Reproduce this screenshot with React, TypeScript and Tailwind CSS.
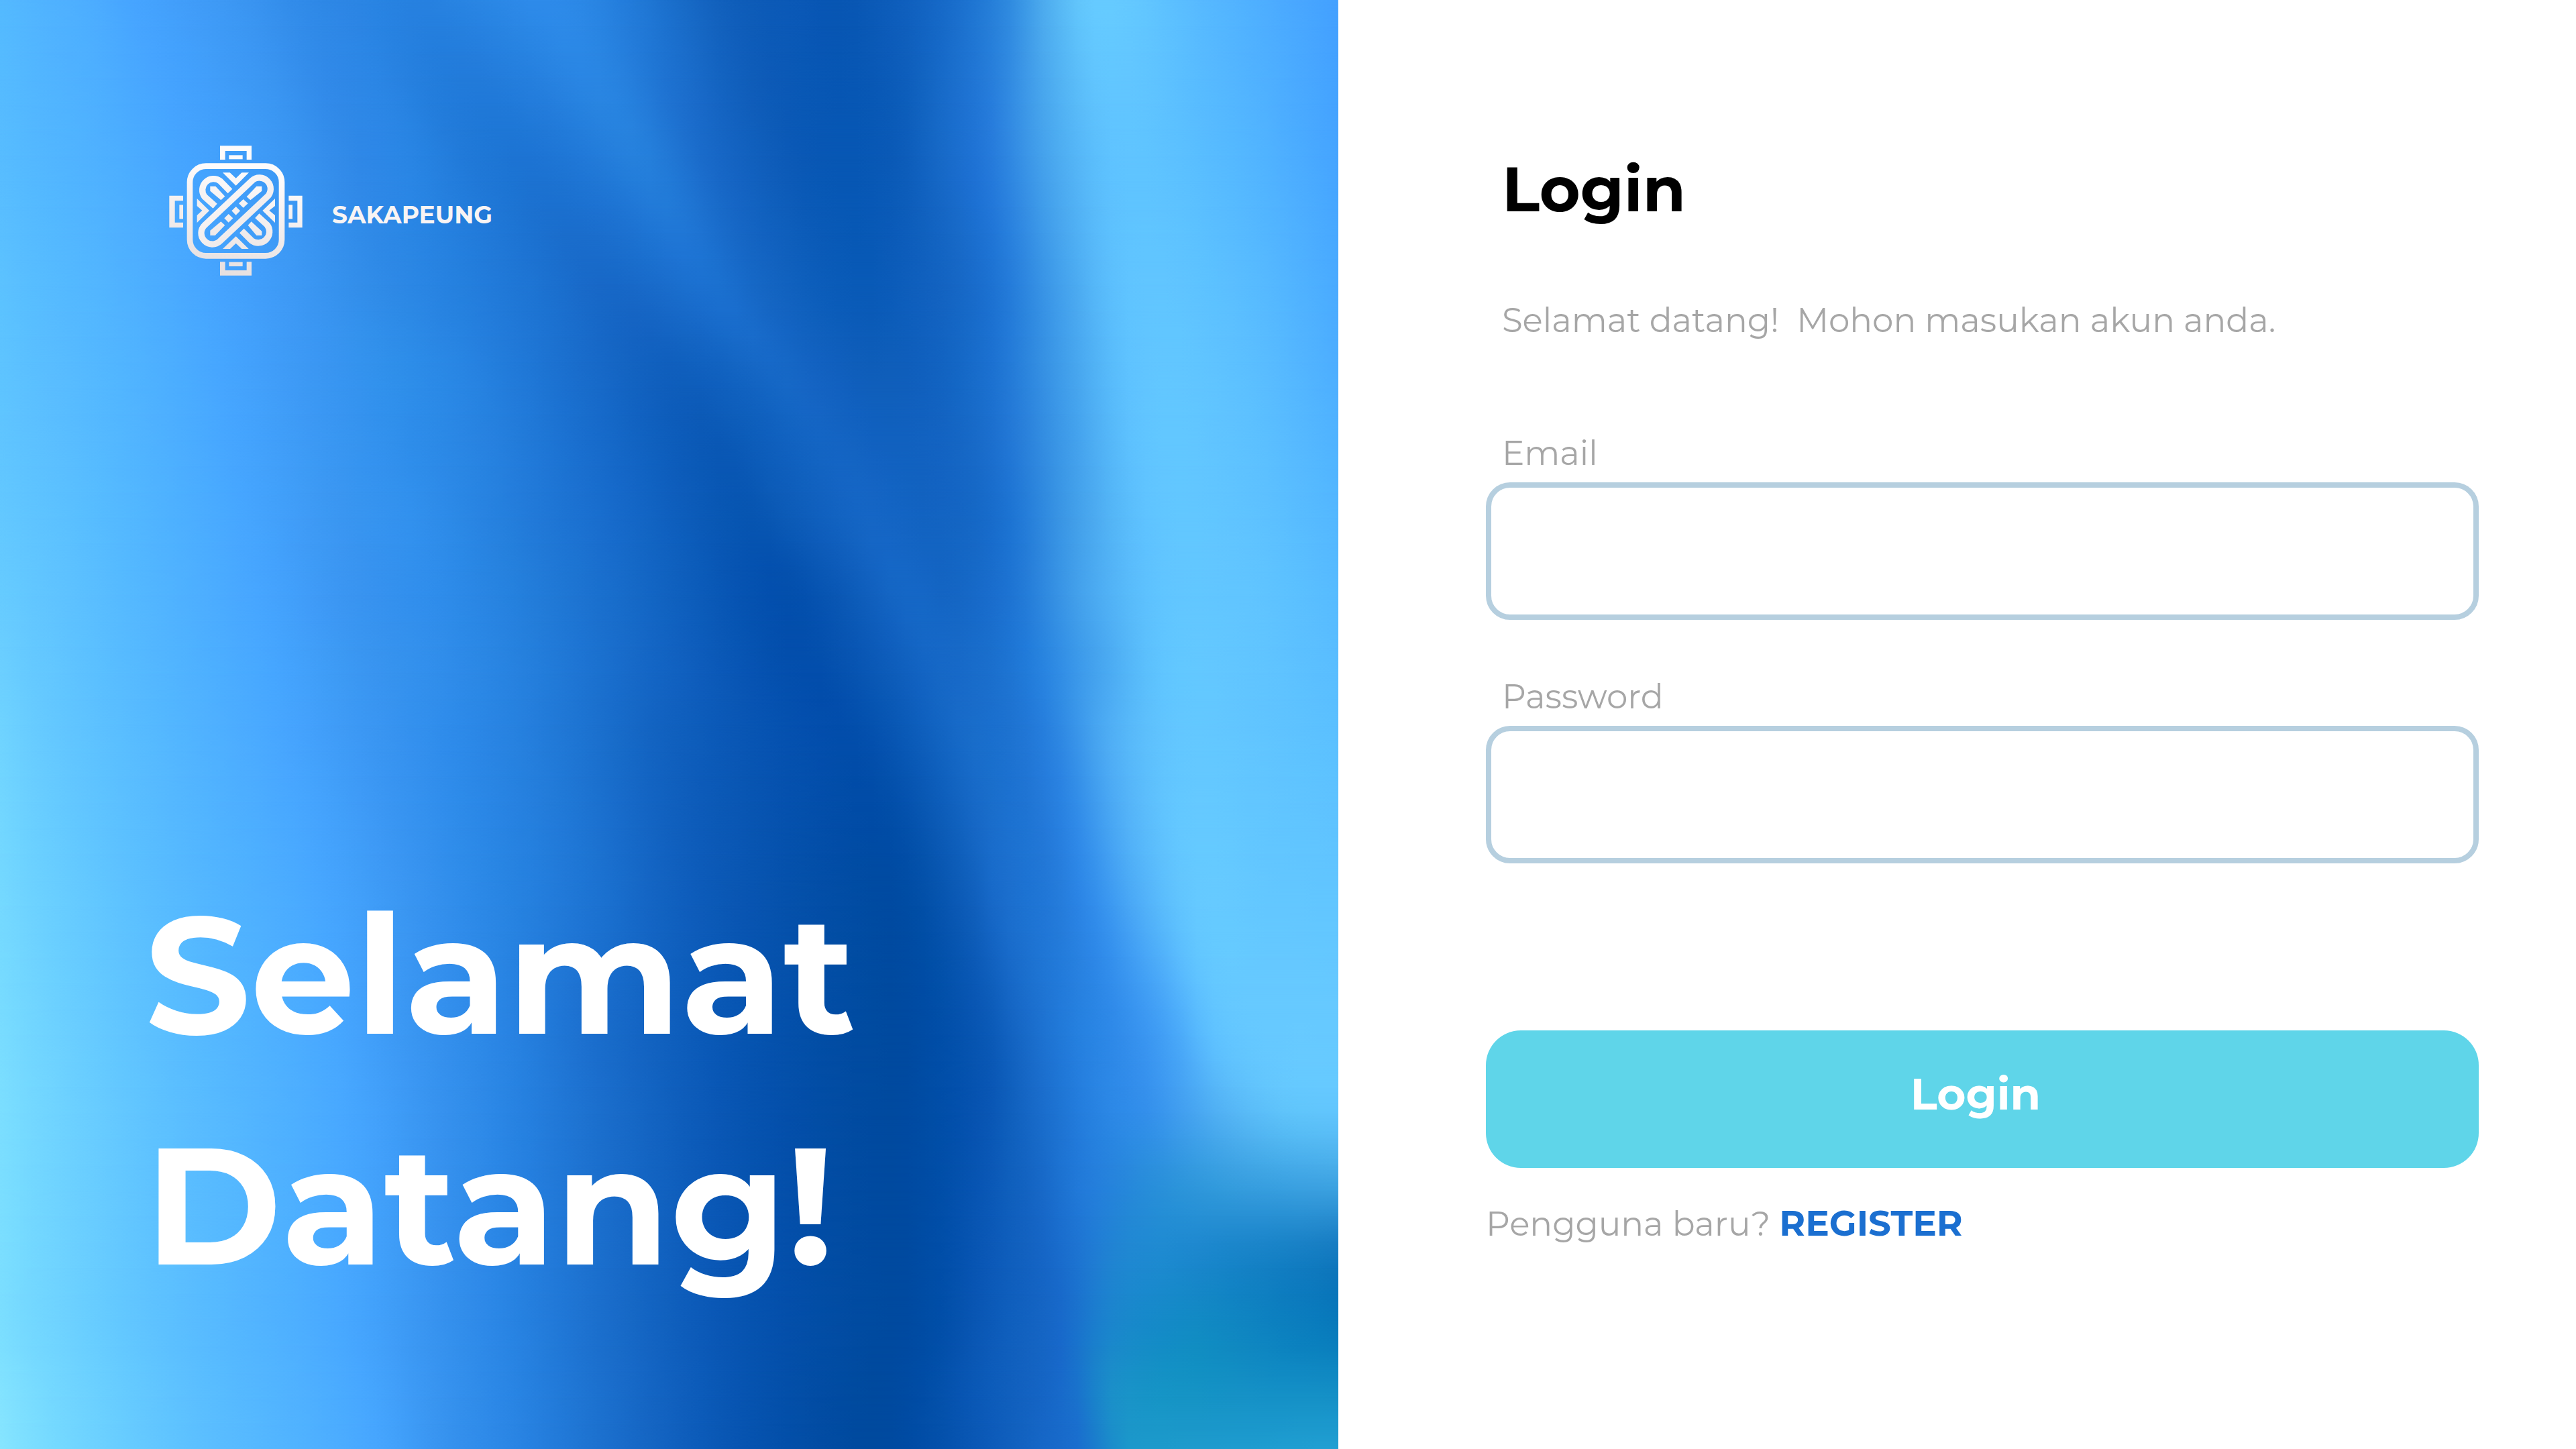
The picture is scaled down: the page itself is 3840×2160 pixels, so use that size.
import React from "react";

type RGB = [number, number, number];
type Stop = { x: number; color: RGB };
type Row = { y: number; stops: Stop[] };

const W = 1565;
const H = 1568;

const hexToRgb = (hex: string): RGB => [
  parseInt(hex.slice(0, 2), 16),
  parseInt(hex.slice(2, 4), 16),
  parseInt(hex.slice(4, 6), 16),
];

const row = (y: number, text: string): Row => ({
  y,
  stops: text.split("|").map((part) => {
    const [x, hex] = part.trim().split(" ");
    return { x: Number(x), color: hexToRgb(hex) };
  }),
});

/* The left half hardly changes in the lower rows, so those rows share it. */
const LOWER_LEFT =
  "0 7bdeff|60 70d4ff|190 5dc1ff|400 48a8ff|505 3894f0|602 2883e2|710 1a6dcb|868 0754b1|1035 004a9f|1090 004da6|";

/* Colour mesh of the backdrop: each row lists the same features from left to right. */
const mesh: Row[] = [
  row(0, "0 54baff|60 50b2ff|110 4cadff|160 46a4ff|275 3c97f3|350 318be9|400 2d86e5|450 2883e2|490 2781e0|560 2a86e4|650 2e8bea|735 237cda|845 1160bc|935 0a58b6|985 0856b3|1060 1060be|1120 1a6fcd|1180 2f8adf|1225 50aff0|1280 66cbff|1420 55b7ff|1565 43a0ff"),
  row(160, "0 57bcff|60 52b6ff|120 4eb0ff|210 46a5ff|325 3c98f4|410 3089e8|470 2a86e5|540 217ad9|600 1d75d4|670 2179d8|745 2681dd|820 1a6bca|895 0f5dba|945 0958b5|1000 0757b4|1050 0b5bb8|1095 1668c6|1155 2479da|1230 4aa8ef|1300 5fc3ff|1420 57bbff|1565 45a4ff"),
  row(320, "0 5cc2ff|60 56bbff|120 52b5ff|242 47a6ff|345 3d99f5|435 318de9|510 2884e2|620 1e75d4|710 1767c6|770 186ac9|840 1b70d0|895 1566c4|955 0d5ebb|985 0a5bb8|1020 095ab7|1070 0f5fbd|1130 1769c7|1175 2178d7|1250 47a5ee|1315 5fc3ff|1430 5cc0ff|1565 4aabff"),
  row(400, "0 5ec4ff|60 59bdff|125 53b7ff|253 47a7ff|362 3c98f4|455 3090eb|540 2885e3|660 1b70cf|775 105fbd|840 1162c0|910 1769c7|945 1464c3|985 105fbd|1010 0f5eba|1040 0f5eba|1090 1161bf|1130 166ac8|1170 1f75d4|1250 43a1ec|1322 5fc3ff|1435 5ec2ff|1565 4daeff"),
  row(480, "0 60c5ff|60 5bbfff|130 54b8ff|264 47a7ff|378 3b98f3|475 2f8eeb|570 2782e0|700 176bcb|830 0a58b5|890 0e5ebb|960 1465c4|990 1464c2|1015 1262c1|1035 1161c0|1060 1161bf|1100 1363c2|1135 1769c7|1175 2074d3|1250 409dea|1330 5fc3ff|1440 5fc3ff|1565 50b3ff"),
  row(560, "0 63c8ff|60 5dc2ff|140 54b9ff|280 47a7ff|393 3b97f2|487 3190ed|592 257fdd|710 186ccc|868 0755b1|930 0d5cb9|1010 1566c5|1030 1566c5|1045 1465c4|1060 1364c3|1085 1263c1|1115 1465c3|1145 1669c7|1185 1e75d4|1260 43a0ea|1340 5fc3ff|1445 60c4ff|1565 53b7ff"),
  row(640, "0 66cbff|60 60c4ff|150 55b9ff|297 47a6ff|410 3a95f1|508 2f8deb|603 2580dd|730 176bc9|905 034fad|970 0956b3|1045 1566c5|1060 1567c6|1075 1567c6|1090 1466c4|1105 1465c3|1125 1567c5|1150 186bca|1190 2077d5|1270 47a5ee|1350 5fc3ff|1450 61c5ff|1565 56bbff"),
  row(720, "0 6bcfff|55 63c7ff|155 56baff|312 47a7ff|425 3a96f1|520 308dea|625 247edc|755 1567c6|930 034eac|1000 0855b2|1090 1567c6|1100 1668c6|1110 1769c7|1120 1769c8|1130 186bc9|1145 196dcb|1170 1c71cf|1210 247fdd|1280 44a2ee|1360 60c5ff|1460 61c5ff|1565 59bdff"),
  row(800, "0 70d4ff|50 66caff|158 58bcff|325 48a7ff|440 3a96f2|530 2e8bea|635 237cda|780 1161bf|975 024dab|1030 0552af|1120 1669c7|1130 186bc9|1140 196dca|1150 196eca|1160 1a6fce|1175 1c71cf|1195 2075d4|1235 2b84e1|1300 50aff5|1370 62c6ff|1470 61c5ff|1565 5bc0ff"),
  row(960, "0 74d8ff|60 69ceff|188 58bcff|364 48a8ff|473 3a96f2|560 2c89e7|667 2078d7|822 0d5bb9|1015 004ba2|1065 014da5|1140 1161be|1150 1566c4|1160 186ac9|1170 1a6dcc|1185 1c70cf|1205 1e74d4|1230 2379d8|1270 2f8ae9|1330 50aff8|1390 64c8ff|1480 63c7ff|1565 61c5ff"),
  row(1120, "0 79dcff|60 6ed2ff|190 5bbfff|386 48a8ff|494 3894f0|592 2984e3|700 1a6dcc|855 0856b3|1035 004a9f|1090 004da6|1155 0a58b5|1170 0e5ebb|1185 1464c2|1200 186ac8|1215 1c70cf|1235 2077d6|1265 2681e0|1315 328deb|1370 46a4f7|1420 5fc2ff|1490 66c9ff|1565 66c9ff"),
  row(1200, LOWER_LEFT + "1155 0956b4|1180 0f5fbc|1200 1566c4|1215 196cca|1230 1c70cf|1260 237cdc|1300 2c88e6|1345 3591ec|1390 45a3f1|1435 55b5f5|1500 60c4fb|1565 62c6fe"),
  row(1280, LOWER_LEFT + "1150 0956b4|1185 1060bd|1210 1666c5|1230 1a6dcc|1250 1f76d5|1280 247edc|1310 2686db|1350 298fda|1400 3098dc|1450 379edf|1510 3ca2e2|1565 3fa4e2"),
  row(1360, LOWER_LEFT + "1150 0a57b5|1185 105fbd|1210 1463c2|1228 1768c8|1245 1a6dcd|1275 1f7ad3|1305 2085d2|1350 1e8ad1|1400 1b87cd|1450 1783c8|1510 147ec3|1565 1178be"),
  row(1440, LOWER_LEFT + "1150 0b58b6|1185 1060be|1210 1463c2|1228 1666c6|1245 186acb|1270 1a78cd|1300 1a86cc|1345 158ac8|1400 118bc3|1450 0f86c1|1510 0b7fbf|1565 087abb"),
  row(1500, "0 82e2ff|60 74d8ff|205 5ec2ff|418 48a8ff|512 3894f0|608 2883e2|718 1a6dcb|868 0754b1|1015 004a9e|1070 004ca4|1150 0c5ab8|1185 1160be|1210 1463c2|1230 1768c7|1250 196ccc|1275 1a7fcb|1300 1b8fc9|1345 1693c6|1400 1492c4|1450 1490c5|1510 138ec5|1565 138dc5"),
  row(1568, "0 86e5ff|60 76daff|215 5ec2ff|430 48a8ff|515 3894f0|612 2883e2|720 1a6dcb|868 0754b1|1010 004a9e|1060 004ba3|1150 0b59b7|1190 1261bf|1220 1667c7|1245 186bcb|1265 1a70cf|1290 1b83cc|1315 1c96cb|1350 1d9acb|1400 1f9bcd|1450 1f9ccf|1510 209ed1|1565 219fd2"),
];

/* Smooth curve through the points (xs[i], ys[i]), read at x. */
const curve = (xs: number[], ys: number[], x: number): number => {
  const last = xs.length - 1;
  let i = 0;
  while (i < last - 1 && x > xs[i + 1]) i += 1;
  const span = xs[i + 1] - xs[i];
  const t = (x - xs[i]) / span;
  const slope = (k: number) => {
    const a = Math.max(k - 1, 0);
    const b = Math.min(k + 1, last);
    return (ys[b] - ys[a]) / (xs[b] - xs[a]);
  };
  const t2 = t * t;
  const t3 = t2 * t;
  return (
    (2 * t3 - 3 * t2 + 1) * ys[i] +
    (t3 - 2 * t2 + t) * span * slope(i) +
    (3 * t2 - 2 * t3) * ys[i + 1] +
    (t3 - t2) * span * slope(i + 1)
  );
};

const STEP_X = 20;
const STEP_Y = 28;
const CHANNELS = [0, 1, 2] as const;
const meshYs = mesh.map((r) => r.y);

const bands = Array.from({ length: H / STEP_Y + 1 }, (_, n) => {
  const y = n * STEP_Y;
  const xs = mesh[0].stops.map((_, j) => curve(meshYs, mesh.map((r) => r.stops[j].x), y));
  const channels = CHANNELS.map((c) =>
    mesh[0].stops.map((_, j) => curve(meshYs, mesh.map((r) => r.stops[j].color[c]), y)),
  );
  const stops = Array.from({ length: Math.ceil(W / STEP_X) + 1 }, (_, k) => {
    const x = Math.min(k * STEP_X, W);
    const [r, g, b] = channels.map((ys) => Math.round(Math.min(255, Math.max(0, curve(xs, ys, x)))));
    return { offset: x / W, color: `rgb(${r} ${g} ${b})` };
  });
  return { y, stops };
});

function Backdrop() {
  return (
    <svg
      className="absolute inset-0 h-full w-full"
      viewBox={`0 0 ${W} ${H}`}
      preserveAspectRatio="none"
      aria-hidden="true"
    >
      <defs>
        {bands.map((band, i) => (
          <linearGradient key={i} id={`band-${i}`} gradientUnits="userSpaceOnUse" x1="0" y1="0" x2={W} y2="0">
            {band.stops.map((stop, j) => (
              <stop key={j} offset={stop.offset} stopColor={stop.color} />
            ))}
          </linearGradient>
        ))}
        {bands.slice(1).map((band, i) => (
          <React.Fragment key={i}>
            <linearGradient id={`fade-${i}`} gradientUnits="userSpaceOnUse" x1="0" y1={bands[i].y} x2="0" y2={band.y}>
              <stop offset="0" stopColor="#fff" stopOpacity="0" />
              <stop offset="1" stopColor="#fff" stopOpacity="1" />
            </linearGradient>
            <mask id={`mask-${i}`} maskUnits="userSpaceOnUse" x="0" y="0" width={W} height={H} style={{ maskType: "alpha" }}>
              <rect x="0" y={bands[i].y} width={W} height={H - bands[i].y} fill={`url(#fade-${i})`} />
            </mask>
          </React.Fragment>
        ))}
      </defs>
      <rect width={W} height={H} fill="url(#band-0)" />
      {bands.slice(1).map((_, i) => (
        <rect key={i} width={W} height={H} fill={`url(#band-${i + 1})`} mask={`url(#mask-${i})`} />
      ))}
    </svg>
  );
}

function LogoMark() {
  return (
    <svg className="h-[194px] w-[199px]" viewBox="20 35 597 582" fill="url(#logo-sheen)" aria-hidden="true">
      <defs>
        <linearGradient id="logo-sheen" gradientUnits="userSpaceOnUse" x1="380" y1="36" x2="260" y2="616">
          <stop offset="0.2" stopColor="#fdfbfb" />
          <stop offset="1" stopColor="#e6dfdf" />
        </linearGradient>
      </defs>
      <path d="M248 98V36H389V98H367V59H271V98Z" />
      <path d="M288 78H349V96H288Z" />
      <path d="M248 555V616H389V555H367V593H271V555Z" />
      <path d="M288 556H349V575H288Z" />
      <path d="M83 259H21V402H83V379H46V282H83Z" />
      <path d="M66 300H83V363H66Z" />
      <path d="M555 259H616V402H555V379H594V282H555Z" />
      <path d="M555 300H572V363H555Z" />
      <path d="M260 156H292L319 181L345 156H377L319 214Z" />
      <path d="M260 497L319 441L376 497H345L319 472L293 497Z" />
      <path d="M145 272L200 326L145 380V347L168 325L145 305Z" />
      <path d="M494 272V305L468 325L494 347V380L438 326Z" />
      <path d="M204 217H228L270 262L252 279L204 238Z" />
      <path d="M435 437H411L373 391L388 375L435 418Z" />
      <path d="M367 264L411 217H435V238L384 279Z" />
      <path d="M204 437V415L252 375L270 391L226 437Z" />
      <path d="M352 275L373 294L352 313L332 294Z" />
      <path d="M319 308L338 327L319 346L300 327Z" />
      <path d="M286 341L306 360L286 379L267 360Z" />
      <g fill="none" stroke="url(#logo-sheen)">
        <rect x="113" y="127" width="411" height="401" rx="72" strokeWidth="26" />
        <rect x="125" y="278" width="388" height="99" rx="49" strokeWidth="28" transform="rotate(-43.2 319 327.5)" />
        <path d="M293 239L249 194A50 50 0 0 0 179 264L226 306" strokeWidth="28" />
        <path d="M345 416L389 460A50 50 0 0 0 459 390L414 349" strokeWidth="28" />
      </g>
    </svg>
  );
}

function Field({ id, label, type }: { id: string; label: string; type: string }) {
  return (
    <div className="flex flex-col">
      <label htmlFor={id} className="px-6 text-[50px] leading-[64px] text-[#a6a6a6]">
        {label}
      </label>
      <input
        id={id}
        name={id}
        type={type}
        className="mt-[11px] h-[205px] w-full rounded-[36px] border-8 border-[#b6cfdf] bg-white px-10 text-[50px] text-black outline-none"
      />
    </div>
  );
}

export default function App() {
  return (
    <div className="flex min-h-screen bg-white font-['Montserrat','Inter',sans-serif]">
      <section className="relative w-[51.95%] overflow-hidden">
        <Backdrop />
        <div className="relative flex min-h-screen flex-col justify-between pt-[217px] pr-16 pb-[191px] pl-[216px]">
          <div className="flex items-center gap-11 pl-9">
            <LogoMark />
            <span className="pt-3 text-[36px] leading-[48px] font-bold text-[#f8f4f4]">SAKAPEUNG</span>
          </div>
          <h1 className="text-[247px] leading-[344px] font-bold text-white">
            Selamat
            <br />
            Datang!
          </h1>
        </div>
      </section>

      <main className="flex-1 pt-[224px] pr-[145px] pl-[220px]">
        <h2 className="px-6 text-[93px] leading-[116px] font-bold text-black">Login</h2>
        <p className="mt-[106px] px-6 text-[50px] leading-[64px] whitespace-pre text-[#a6a6a6]">
          {"Selamat datang!  Mohon masukan akun anda."}
        </p>
        <form className="mt-[134px]" onSubmit={(e) => e.preventDefault()}>
          <div className="flex flex-col gap-[83px]">
            <Field id="email" label="Email" type="email" />
            <Field id="password" label="Password" type="password" />
          </div>
          <button
            type="submit"
            className="mt-[249px] h-[205px] w-full rounded-[52px] bg-[#5fd5e9] pr-5 pb-4 text-[66px] leading-[80px] font-bold text-white"
          >
            Login
          </button>
        </form>
        <p className="mt-[50px] text-[50px] leading-[64px] text-[#a6a6a6]">
          Pengguna baru?{" "}
          <a href="#register" className="text-[53px] font-bold text-[#1b6fd0]">
            REGISTER
          </a>
        </p>
      </main>
    </div>
  );
}
